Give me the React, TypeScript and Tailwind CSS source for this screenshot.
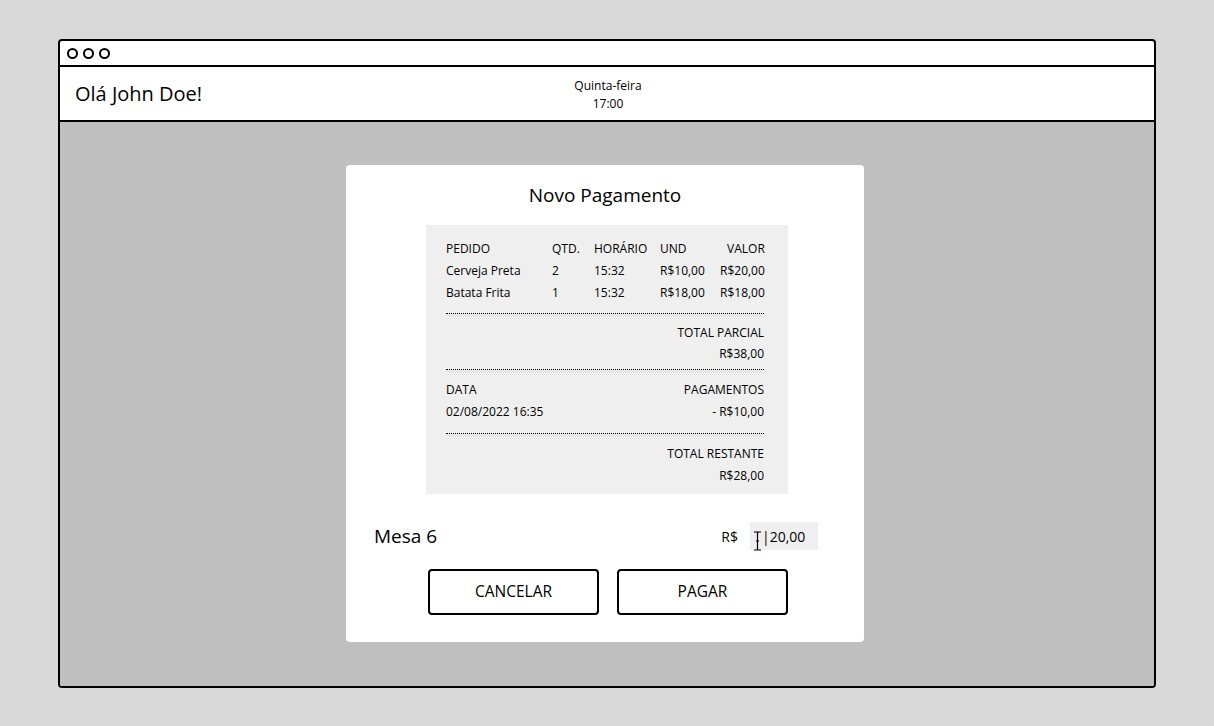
const items = [
  { name: 'Cerveja Preta', qtd: '2', hora: '15:32', und: 'R$10,00', valor: 'R$20,00' },
  { name: 'Batata Frita', qtd: '1', hora: '15:32', und: 'R$18,00', valor: 'R$18,00' },
];

const Divider = ({ className }: { className: string }) => (
  <div className={`h-[1px] border-t border-dotted border-black shadow-[0_2px_3px_rgba(0,0,0,0.12)] ${className}`} />
);

const App = () => {
  return (
    <div
      className="w-[1214px] h-[726px] bg-[#d9d9d9] pt-[39px] pl-[58px] text-black"
      style={{ fontFamily: '"Open Sans", "Noto Sans", sans-serif' }}
    >
      <div className="w-[1098px] h-[649px] border-2 border-black rounded-[4px] bg-white flex flex-col overflow-hidden">
        {/* Title bar */}
        <div className="h-[26px] border-b-2 border-black flex items-center gap-[5px] pl-[7px] shrink-0">
          <span className="w-[11px] h-[11px] rounded-full border-2 border-black" />
          <span className="w-[11px] h-[11px] rounded-full border-2 border-black" />
          <span className="w-[11px] h-[11px] rounded-full border-2 border-black" />
        </div>

        {/* Header */}
        <div className="h-[55px] border-b-2 border-black flex items-center relative shrink-0">
          <span className="pl-[15px] text-[20px] leading-none">Olá John Doe!</span>
          <div className="absolute left-[497px] top-[10px] w-[102px] flex flex-col items-center text-[12px] leading-[18px]">
            <span>Quinta-feira</span>
            <span>17:00</span>
          </div>
        </div>

        {/* Body */}
        <div className="flex-1 bg-[#bfbfbf] pt-[43px] pl-[286px]">
          <div className="w-[518px] h-[477px] bg-white rounded-[4px] flex flex-col items-center pt-[18px]">
            <h2 className="text-[19px] leading-[24px]">Novo Pagamento</h2>

            {/* Receipt */}
            <div className="mt-[18px] ml-[4px] w-[362px] h-[269px] bg-[#efefef] pl-[20px] pr-[24px] pt-[13px] text-[12px]">
              <div className="grid grid-cols-[106px_42px_66px_1fr_60px] leading-[22px]">
                <span>PEDIDO</span>
                <span>QTD.</span>
                <span>HORÁRIO</span>
                <span>UND</span>
                <span className="text-right">VALOR</span>
                {items.map((it) => (
                  <div key={it.name} className="contents">
                    <span>{it.name}</span>
                    <span>{it.qtd}</span>
                    <span>{it.hora}</span>
                    <span>{it.und}</span>
                    <span className="text-right">{it.valor}</span>
                  </div>
                ))}
              </div>
              <Divider className="mt-[9px] mb-[8px]" />
              <div className="flex flex-col items-end leading-[21px]">
                <span>TOTAL PARCIAL</span>
                <span>R$38,00</span>
              </div>
              <Divider className="mt-[5px] mb-[9px]" />
              <div className="flex justify-between leading-[22px]">
                <div className="flex flex-col">
                  <span>DATA</span>
                  <span>02/08/2022 16:35</span>
                </div>
                <div className="flex flex-col items-end">
                  <span>PAGAMENTOS</span>
                  <span>- R$10,00</span>
                </div>
              </div>
              <Divider className="mt-[10px] mb-[9px]" />
              <div className="flex flex-col items-end leading-[22px]">
                <span>TOTAL RESTANTE</span>
                <span>R$28,00</span>
              </div>
            </div>

            {/* Mesa + valor */}
            <div className="w-full mt-[28px] pl-[28px] pr-[46px] flex items-center justify-between">
              <span className="text-[19px]">Mesa 6</span>
              <div className="flex items-center gap-[12px]">
                <span className="text-[14px]">R$</span>
                <div className="relative w-[68px] h-[28px] bg-[#efefef] flex items-center pl-[12px] text-[14px]">
                  <span>|20,00</span>
                  <svg
                    className="absolute left-[3px] top-[9px]"
                    width="9"
                    height="20"
                    viewBox="0 0 9 20"
                    fill="none"
                    stroke="black"
                    strokeWidth="1.2"
                  >
                    <path d="M1 1h3l0.5 0.6L5 1h3M4.5 1.6v16.8M1 19h3l0.5-0.6L5 19h3M3 10h3" />
                  </svg>
                </div>
              </div>
            </div>

            {/* Buttons */}
            <div className="mt-[18px] ml-[6px] flex gap-[18px]">
              <button className="w-[171px] h-[46px] border-2 border-black rounded-[4px] text-[15.5px] pt-[1px]">
                CANCELAR
              </button>
              <button className="w-[171px] h-[46px] border-2 border-black rounded-[4px] text-[15.5px] pt-[1px]">
                PAGAR
              </button>
            </div>
          </div>
        </div>
      </div>
    </div>
  );
};

export default App;
